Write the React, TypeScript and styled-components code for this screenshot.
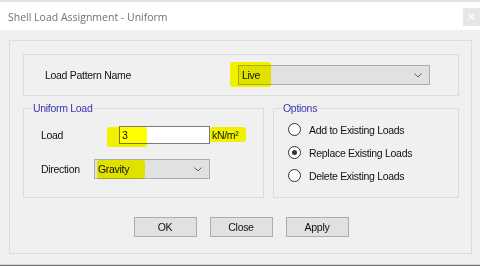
import React from "react";
import styled, { createGlobalStyle } from "styled-components";

const Global = createGlobalStyle`
  html, body { margin: 0; padding: 0; background: #f0f0f0; }
  body { width: 480px; height: 266px; overflow: hidden; }
  * { box-sizing: border-box; }
`;

const Window = styled.div`
  position: relative;
  width: 480px;
  height: 266px;
  display: flex;
  flex-direction: column;
  font-family: "Liberation Sans", Arial, sans-serif;
  font-size: 10.5px;
  letter-spacing: -0.3px;
  color: #111111;
`;

const TopStrip = styled.div`
  height: 2px;
  background: #e2e2e2;
`;

const TitleBar = styled.div`
  height: 28px;
  background: #ffffff;
  display: flex;
  align-items: center;
  justify-content: space-between;
  padding-left: 8px;
`;

const Title = styled.span`
  font-family: "Open Sans", "Noto Sans", sans-serif;
  font-size: 10.5px;
  letter-spacing: 0;
  color: #727272;
  margin-top: 1px;
`;

const CloseBox = styled.div`
  width: 17px;
  height: 18px;
  margin-top: 1px;
  background: #e6e6e6;
  display: flex;
  align-items: center;
  justify-content: center;
`;

const Body = styled.div`
  flex: 1;
  padding: 10px 8px 0 9px;
  background: #f0f0f0;
`;

const Panel = styled.div`
  border: 1px solid #dcdcdc;
  padding: 13px 12px 16px 13px;
  display: flex;
  flex-direction: column;
`;

const PatternBox = styled.div`
  height: 42px;
  border: 1px solid #dcdcdc;
  display: flex;
  align-items: center;
  padding-left: 21px;
`;

const Label = styled.span<{ $w: number }>`
  flex: 0 0 ${(p) => p.$w}px;
  white-space: nowrap;
`;

const Combo = styled.div<{ $w: number }>`
  width: ${(p) => p.$w}px;
  height: 20px;
  background: #e1e1e1;
  border: 1px solid #adadad;
  display: flex;
  align-items: center;
  justify-content: space-between;
  padding: 0 7px 0 3px;
`;

const GroupRow = styled.div`
  display: flex;
  gap: 9px;
  margin-top: 12px;
`;

const Group = styled.div<{ $w?: number }>`
  position: relative;
  height: 90px;
  border: 1px solid #dcdcdc;
  ${(p) => (p.$w ? `flex: 0 0 ${p.$w}px;` : "flex: 1;")}
  display: flex;
  flex-direction: column;
`;

const Legend = styled.span`
  position: absolute;
  top: -7px;
  left: 8px;
  padding: 0 1px;
  background: #f0f0f0;
  color: #3b35b0;
  line-height: 12px;
`;

const UniformBody = styled.div`
  display: flex;
  flex-direction: column;
  padding: 17px 0 0 17px;
  gap: 15px;
`;

const FieldRow = styled.div`
  display: flex;
  align-items: center;
`;

const TextInput = styled.div`
  width: 91px;
  height: 18px;
  background: #ffffff;
  border: 1px solid #7a7a7a;
  display: flex;
  align-items: center;
  padding-left: 2px;
`;

const Unit = styled.span`
  margin-left: 2px;
`;

const OptionsBody = styled.div`
  display: flex;
  flex-direction: column;
  padding: 14px 0 0 14px;
  gap: 10px;
`;

const RadioRow = styled.div`
  display: flex;
  align-items: center;
  gap: 8px;
  height: 13px;
`;

const RadioCircle = styled.span<{ $on?: boolean }>`
  width: 13px;
  height: 13px;
  border-radius: 50%;
  border: 1px solid #333333;
  background: #ffffff;
  display: flex;
  align-items: center;
  justify-content: center;
  &::after {
    content: "";
    width: 5px;
    height: 5px;
    border-radius: 50%;
    background: ${(p) => (p.$on ? "#333333" : "transparent")};
  }
`;

const ButtonRow = styled.div`
  display: flex;
  justify-content: center;
  gap: 13px;
  margin-top: 19px;
`;

const Button = styled.div`
  width: 63px;
  height: 20px;
  background: #e1e1e1;
  border: 1px solid #adadad;
  display: flex;
  align-items: center;
  justify-content: center;
`;

const BottomStrip = styled.div`
  height: 2px;
  background: linear-gradient(#d6d6d6 0 50%, #6e6e6e 50% 100%);
`;

const Highlight = styled.div<{ $x: number; $y: number; $w: number; $h: number }>`
  position: absolute;
  left: ${(p) => p.$x}px;
  top: ${(p) => p.$y}px;
  width: ${(p) => p.$w}px;
  height: ${(p) => p.$h}px;
  background: #ffff00;
  mix-blend-mode: multiply;
  border-radius: 3px;
`;

const Chevron = () => (
  <svg width="8" height="5" viewBox="0 0 8 5">
    <polyline points="0.5,0.5 4,4 7.5,0.5" fill="none" stroke="#606060" strokeWidth="1" />
  </svg>
);

const CloseX = () => (
  <svg width="7" height="7" viewBox="0 0 7 7">
    <path d="M0.5 0.5 L6.5 6.5 M6.5 0.5 L0.5 6.5" stroke="#ffffff" strokeWidth="1.2" />
  </svg>
);

const options = [
  { label: "Add to Existing Loads", on: false },
  { label: "Replace Existing Loads", on: true },
  { label: "Delete Existing Loads", on: false },
];

export default function App() {
  return (
    <Window>
      <Global />
      <TopStrip />
      <TitleBar>
        <Title>Shell Load Assignment - Uniform</Title>
        <CloseBox>
          <CloseX />
        </CloseBox>
      </TitleBar>
      <Body>
        <Panel>
          <PatternBox>
            <Label $w={193}>Load Pattern Name</Label>
            <Combo $w={192}>
              <span>Live</span>
              <Chevron />
            </Combo>
          </PatternBox>
          <GroupRow>
            <Group $w={241}>
              <Legend>Uniform Load</Legend>
              <UniformBody>
                <FieldRow>
                  <Label $w={78}>Load</Label>
                  <TextInput>3</TextInput>
                  <Unit>kN/m²</Unit>
                </FieldRow>
                <FieldRow>
                  <Label $w={53}>Direction</Label>
                  <Combo $w={116}>
                    <span>Gravity</span>
                    <Chevron />
                  </Combo>
                </FieldRow>
              </UniformBody>
            </Group>
            <Group>
              <Legend>Options</Legend>
              <OptionsBody>
                {options.map((o) => (
                  <RadioRow key={o.label}>
                    <RadioCircle $on={o.on} />
                    <span>{o.label}</span>
                  </RadioRow>
                ))}
              </OptionsBody>
            </Group>
          </GroupRow>
          <ButtonRow>
            <Button>OK</Button>
            <Button>Close</Button>
            <Button>Apply</Button>
          </ButtonRow>
        </Panel>
      </Body>
      <BottomStrip />
      <Highlight $x={230} $y={62} $w={41} $h={25} />
      <Highlight $x={107} $y={127} $w={40} $h={20} />
      <Highlight $x={210} $y={127} $w={36} $h={15} />
      <Highlight $x={97} $y={160} $w={48} $h={19} />
    </Window>
  );
}
